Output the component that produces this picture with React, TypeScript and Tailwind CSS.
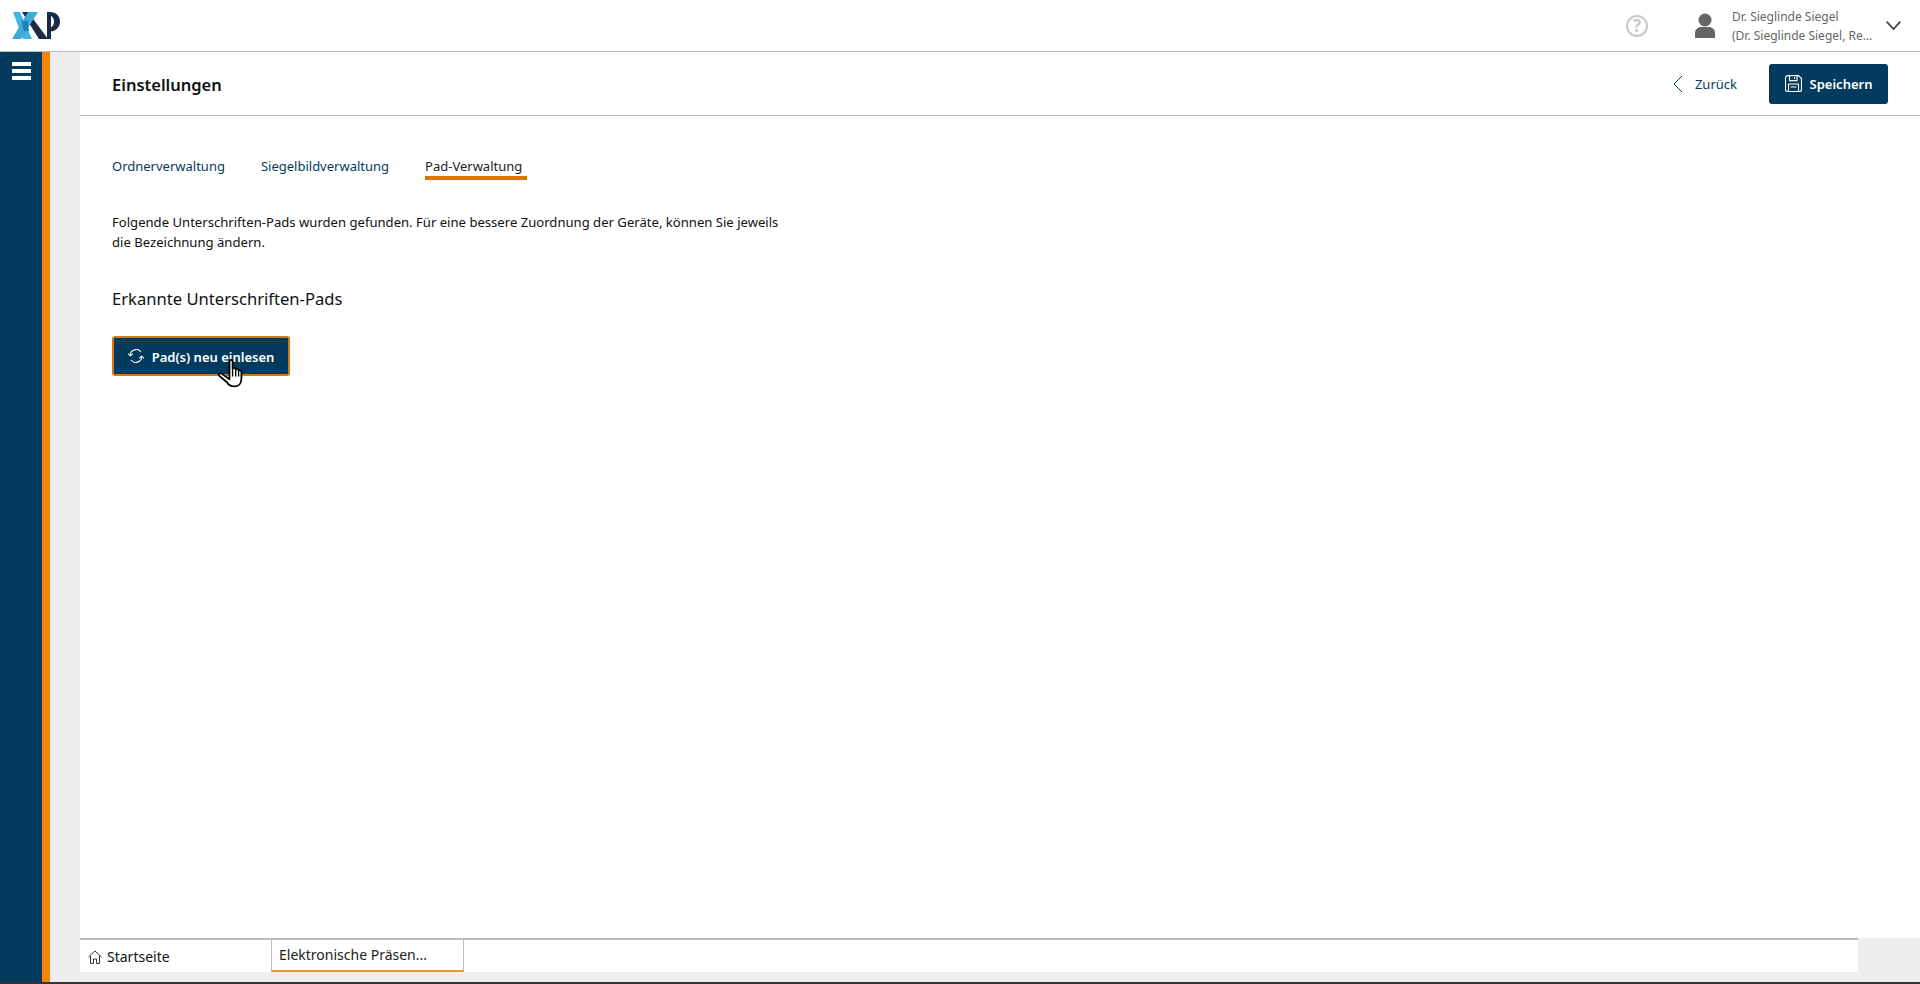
function Logo() {
  return (
    <svg width="48" height="27" viewBox="0 0 48 27">
      <polygon points="10,0 16,0 36,27 27,27" fill="#1a2b45" />
      <rect x="35" y="0" width="4" height="27" fill="#1a2b45" />
      <path d="M35 0h3c6 0 10 4 10 9.500s-4 10-10 10h-1v-3.500c3 0 5-3 5-6.500s-2-6-5-6h-2z" fill="#1a2b45" />
      <polygon points="1,0 8,0 20,27 11,27" fill="#45b3e0" />
      <polygon points="16,0 26,0 9,27 0,27" fill="#3fa9d8" />
      <polygon points="9.500,9 15.500,9 17,19 12,19" fill="#1f7fb5" />
    </svg>
  );
}

function SaveIcon() {
  return (
    <svg width="17" height="17" viewBox="0 0 17 17" fill="none" stroke="white" strokeWidth="1.1">
      <path d="M3 .6h10.500l3 3V14.500a2 2 0 0 1-2 2H2.500a2 2 0 0 1-2-2V3a2.400 2.400 0 0 1 2.500-2.400z" />
      <path d="M4.500 .6v5h7.500v-5M9.500 2v2" />
      <path d="M3.500 16.500V9h10v7.500M5.500 12h6" />
    </svg>
  );
}

function SyncIcon() {
  return (
    <svg width="16" height="14" viewBox="0 0 16 14" fill="none" stroke="white" strokeWidth="1.1">
      <path d="M13 3A6 6 0 0 0 2.200 6.500" />
      <path d="M.3 4.500 2.200 6.800 4.700 5" />
      <path d="M3 11a6 6 0 0 0 10.800-3.500" />
      <path d="M11.300 9 13.800 7.200 15.700 9.500" />
    </svg>
  );
}

function HomeIcon() {
  return (
    <svg width="14" height="14" viewBox="0 0 14 14" fill="none" stroke="#333" strokeWidth="1">
      <path d="M.5 7 7 1l6.500 6" />
      <path d="M2.500 6v7.500h3V9h3v4.500h3V6" />
    </svg>
  );
}

function HandCursor() {
  return (
    <svg width="27" height="30" viewBox="0 0 26 28" className="absolute left-[105px] top-[23px]">
      <path
        d="M12 2c0-2 3-2 3 0v7c.4-1.300 3-1.200 3 .4v.6c.4-1.300 2.800-1.100 2.800.5v.7c.4-1.200 2.700-.9 2.700.7v6.600c0 4.500-2.700 7.500-6.800 7.500-3.600 0-5.600-1.500-7.400-4.300L2 15.500c-1-1.800 1.400-3.100 2.700-1.600L12 19z"
        fill="white"
        stroke="black"
        strokeWidth="1.7"
        strokeLinejoin="round"
      />
      <path d="M15 9.500v7M18 10.500v6M20.800 11.500v5" stroke="black" strokeWidth="1.300" />
    </svg>
  );
}

export default function App() {
  return (
    <div className="flex h-[984px] w-[1920px] flex-col overflow-hidden border-b-2 border-[#333] bg-white font-['Noto_Sans',sans-serif] text-[13px] text-[#111]">
      <header className="flex h-[52px] shrink-0 items-center justify-between border-b-[1.5px] border-[#bbb] pl-[12px]">
        <Logo />
        <div className="flex items-center">
          <svg width="24" height="24" viewBox="0 0 24 24" fill="none" className="mr-[46px]">
            <circle cx="12" cy="12" r="10" stroke="#c8c8c8" strokeWidth="2" />
            <text x="12" y="18" textAnchor="middle" fontSize="17" fontWeight="700" fill="#c8c8c8">?</text>
          </svg>
          <svg width="20" height="25" viewBox="0 0 20 25" className="mr-[17px]" fill="#666">
            <circle cx="10" cy="7" r="6.500" />
            <path d="M0 25v-5c0-3.500 3-6 6-6h8c3 0 6 2.500 6 6v5z" />
          </svg>
          <div className="w-[142px] text-[12px] leading-[19px] text-[#666]">
            <div>Dr. Sieglinde Siegel</div>
            <div className="overflow-hidden text-ellipsis whitespace-nowrap">(Dr. Sieglinde Siegel, Rechtsanwälte)</div>
          </div>
          <svg width="15" height="9" viewBox="0 0 15 9" fill="none" stroke="#444" strokeWidth="1.800" className="ml-[12px] mr-[19px]">
            <path d="M.7.7 7.500 8l6.800-7.300" />
          </svg>
        </div>
      </header>

      <div className="flex min-h-0 flex-1">
        <aside className="w-[42px] shrink-0 bg-[#033b5e] pl-[12px] pt-[10px]">
          <div className="flex w-[19px] flex-col gap-[3px]">
            <div className="h-[4px] bg-white" />
            <div className="h-[4px] bg-white" />
            <div className="h-[4px] bg-white" />
          </div>
        </aside>
        <div className="w-[8px] shrink-0 bg-[#f5820a]" />
        <div className="w-[30px] shrink-0 bg-[#eeeeee]" />

        <main className="flex min-w-0 flex-1 flex-col">
          <div className="flex h-[64px] shrink-0 items-center justify-between border-b-[1.5px] border-[#bbb] px-[32px]">
            <h1 className="pt-[3px] text-[16.500px] font-semibold">Einstellungen</h1>
            <div className="flex items-center">
              <svg width="10" height="18" viewBox="0 0 10 18" fill="none" stroke="#033b5e" strokeWidth="1">
                <path d="M9 1 1 9l8 8" />
              </svg>
              <span className="ml-[12px] mr-[32px] pt-[2px] text-[#033b5e]">Zurück</span>
              <button className="flex h-[40px] w-[119px] items-center justify-center gap-[8px] rounded-[3px] bg-[#033b5e] font-semibold text-white">
                <SaveIcon />
                <span className="pt-[2px]">Speichern</span>
              </button>
            </div>
          </div>

          <div className="flex-1 px-[32px] pt-[41px]">
            <nav className="flex gap-[36px] text-[#033b5e]">
              <span className="h-[23px] leading-[18px]">Ordnerverwaltung</span>
              <span className="h-[23px] leading-[18px]">Siegelbildverwaltung</span>
              <span className="h-[23px] border-b-4 border-[#e07400] pr-[5px] leading-[18px] text-[#222]">Pad-Verwaltung</span>
            </nav>
            <p className="mt-[32px] w-[680px] text-[13.100px] leading-[20px]">
              Folgende Unterschriften-Pads wurden gefunden. Für eine bessere Zuordnung der Geräte, können Sie jeweils die Bezeichnung ändern.
            </p>
            <h2 className="mt-[35px] text-[16.600px] leading-[24px]">Erkannte Unterschriften-Pads</h2>
            <div className="relative mt-[25px] w-fit">
              <button className="flex h-[40px] w-[178px] items-center justify-center gap-[8px] rounded-[3px] border-2 border-[#d9770f] bg-[#033b5e] font-semibold text-white">
                <SyncIcon />
                <span className="pt-[3px]">Pad(s) neu einlesen</span>
              </button>
              <HandCursor />
            </div>
          </div>

          <div className="flex h-[44px] shrink-0 bg-[#eeeeee] pb-[10px] text-[14px]">
            <div className="flex w-[1778px] border-t-2 border-[#bbb] bg-white">
              <div className="flex w-[191px] items-center gap-[5px] pl-[8px] pt-[1px]">
                <HomeIcon />
                Startseite
              </div>
              <div className="w-[193px] border-x-[1.5px] border-b-2 border-[#bbb] border-b-[#e8963a] pl-[7px] pt-[4px] text-[#222]">
                Elektronische Präsen...
              </div>
            </div>
          </div>
        </main>
      </div>
    </div>
  );
}
